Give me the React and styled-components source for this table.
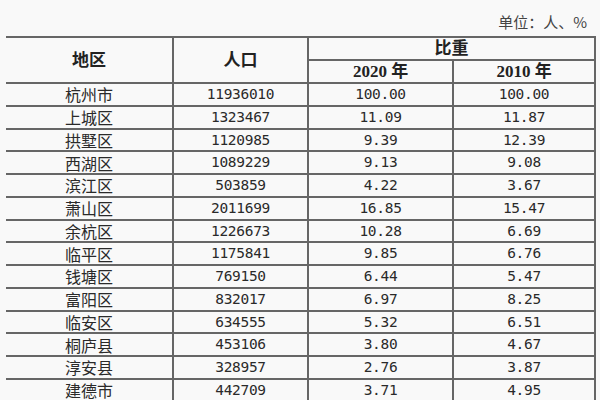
import React from "react";
import styled, { createGlobalStyle } from "styled-components";

const GlobalStyle = createGlobalStyle`
  html, body {
    margin: 0;
    padding: 0;
    background-color: #f9f9f9;
  }
`;

const Page = styled.div`
  width: 600px;
  height: 400px;
  overflow: hidden;
  padding: 0 5px 0 6px;
  box-sizing: border-box;
  background-color: #f9f9f9;
  color: #2a2a2a;
  font-family: "Noto Sans CJK SC", sans-serif;
`;

const UnitLine = styled.div`
  height: 36px;
  display: flex;
  justify-content: flex-end;
  align-items: flex-end;
  padding: 0 8px 4px 0;
  box-sizing: border-box;
  font-size: 15px;
  color: #444444;
`;

const Table = styled.table`
  width: 589px;
  border-collapse: collapse;
  table-layout: fixed;
  border-top: 2px solid #666666;
  border-right: 2px solid #666666;
`;

const HeadCell = styled.th`
  height: ${(p) => p.$h || 20}px;
  padding: 0;
  border-bottom: 2px solid #666666;
  border-left: ${(p) => (p.$first ? "none" : "2px solid #666666")};
  text-align: center;
  vertical-align: middle;
  font-size: 17px;
  font-weight: 700;
  color: #222222;
  font-family: "Liberation Serif", "Noto Sans CJK SC", serif;
  line-height: 1;
`;

const Row = styled.tr`
  height: 22.75px;
`;

const Cell = styled.td`
  padding: 0;
  border-bottom: 2px solid #666666;
  border-left: ${(p) => (p.$first ? "none" : "2px solid #666666")};
  text-align: center;
  vertical-align: middle;
  line-height: 1;
  font-size: ${(p) => (p.$num ? "14.5px" : "16px")};
  letter-spacing: ${(p) => (p.$num ? "-0.3px" : "0")};
  font-family: ${(p) =>
    p.$num
      ? `"DejaVu Sans Mono", monospace`
      : `"Noto Sans CJK SC", sans-serif`};
  color: #2a2a2a;
`;

const rows = [
  ["杭州市", "11936010", "100.00", "100.00"],
  ["上城区", "1323467", "11.09", "11.87"],
  ["拱墅区", "1120985", "9.39", "12.39"],
  ["西湖区", "1089229", "9.13", "9.08"],
  ["滨江区", "503859", "4.22", "3.67"],
  ["萧山区", "2011699", "16.85", "15.47"],
  ["余杭区", "1226673", "10.28", "6.69"],
  ["临平区", "1175841", "9.85", "6.76"],
  ["钱塘区", "769150", "6.44", "5.47"],
  ["富阳区", "832017", "6.97", "8.25"],
  ["临安区", "634555", "5.32", "6.51"],
  ["桐庐县", "453106", "3.80", "4.67"],
  ["淳安县", "328957", "2.76", "3.87"],
  ["建德市", "442709", "3.71", "4.95"],
];

const App = () => {
  return (
    <Page>
      <GlobalStyle />
      <UnitLine>单位：人、%</UnitLine>
      <Table>
        <colgroup>
          <col style={{ width: 167 }} />
          <col style={{ width: 135 }} />
          <col style={{ width: 145 }} />
          <col style={{ width: 142 }} />
        </colgroup>
        <thead>
          <tr>
            <HeadCell $first rowSpan={2}>地区</HeadCell>
            <HeadCell rowSpan={2}>人口</HeadCell>
            <HeadCell colSpan={2} $h={21}>比重</HeadCell>
          </tr>
          <tr>
            <HeadCell $h={21}>2020 年</HeadCell>
            <HeadCell $h={21}>2010 年</HeadCell>
          </tr>
        </thead>
        <tbody>
          {rows.map((r) => (
            <Row key={r[0]}>
              <Cell $first>{r[0]}</Cell>
              <Cell $num>{r[1]}</Cell>
              <Cell $num>{r[2]}</Cell>
              <Cell $num>{r[3]}</Cell>
            </Row>
          ))}
        </tbody>
      </Table>
    </Page>
  );
};

export default App;
